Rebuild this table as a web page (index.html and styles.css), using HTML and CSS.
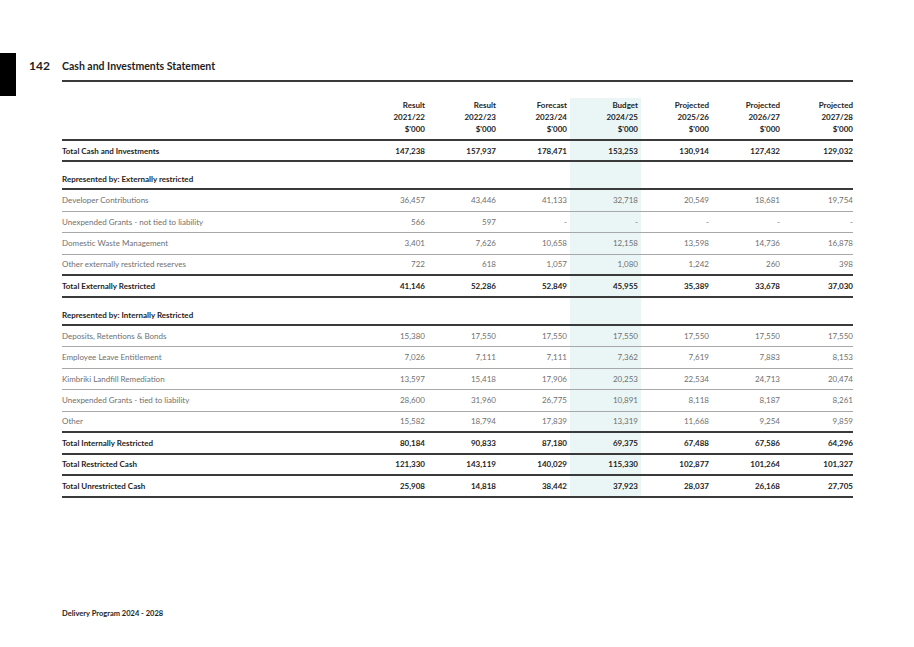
FILE: index.html
```html
<!DOCTYPE html>
<html lang="en">
<head>
<meta charset="utf-8">
<title>Cash and Investments Statement</title>
<link rel="stylesheet" href="styles.css">
</head>
<body>
<div class="page">
  <div class="edge-bar"></div>
  <div class="content">
    <div class="page-head">
      <span class="page-num">142</span>
      <h1 class="title">Cash and Investments Statement</h1>
    </div>
    <div class="statement">
      <div class="row head">
        <div class="cell label"></div>
        <div class="cell num">Result<br>2021/22<br>$'000</div>
        <div class="cell num">Result<br>2022/23<br>$'000</div>
        <div class="cell num">Forecast<br>2023/24<br>$'000</div>
        <div class="cell num hl">Budget<br>2024/25<br>$'000</div>
        <div class="cell num">Projected<br>2025/26<br>$'000</div>
        <div class="cell num">Projected<br>2026/27<br>$'000</div>
        <div class="cell num">Projected<br>2027/28<br>$'000</div>
      </div>
      <div class="row total">
        <div class="cell label">Total Cash and Investments</div>
        <div class="cell num">147,238</div><div class="cell num">157,937</div><div class="cell num">178,471</div><div class="cell num hl">153,253</div><div class="cell num">130,914</div><div class="cell num">127,432</div><div class="cell num">129,032</div>
      </div>
      <div class="row section">
        <div class="cell label">Represented by: Externally restricted</div>
        <div class="cell num"></div><div class="cell num"></div><div class="cell num"></div><div class="cell num hl"></div><div class="cell num"></div><div class="cell num"></div><div class="cell num"></div>
      </div>
      <div class="row data">
        <div class="cell label">Developer Contributions</div>
        <div class="cell num">36,457</div><div class="cell num">43,446</div><div class="cell num">41,133</div><div class="cell num hl">32,718</div><div class="cell num">20,549</div><div class="cell num">18,681</div><div class="cell num">19,754</div>
      </div>
      <div class="row data">
        <div class="cell label">Unexpended Grants - not tied to liability</div>
        <div class="cell num">566</div><div class="cell num">597</div><div class="cell num">-</div><div class="cell num hl">-</div><div class="cell num">-</div><div class="cell num">-</div><div class="cell num">-</div>
      </div>
      <div class="row data">
        <div class="cell label">Domestic Waste Management</div>
        <div class="cell num">3,401</div><div class="cell num">7,626</div><div class="cell num">10,658</div><div class="cell num hl">12,158</div><div class="cell num">13,598</div><div class="cell num">14,736</div><div class="cell num">16,878</div>
      </div>
      <div class="row data last">
        <div class="cell label">Other externally restricted reserves</div>
        <div class="cell num">722</div><div class="cell num">618</div><div class="cell num">1,057</div><div class="cell num hl">1,080</div><div class="cell num">1,242</div><div class="cell num">260</div><div class="cell num">398</div>
      </div>
      <div class="row total">
        <div class="cell label">Total Externally Restricted</div>
        <div class="cell num">41,146</div><div class="cell num">52,286</div><div class="cell num">52,849</div><div class="cell num hl">45,955</div><div class="cell num">35,389</div><div class="cell num">33,678</div><div class="cell num">37,030</div>
      </div>
      <div class="row section">
        <div class="cell label">Represented by: Internally Restricted</div>
        <div class="cell num"></div><div class="cell num"></div><div class="cell num"></div><div class="cell num hl"></div><div class="cell num"></div><div class="cell num"></div><div class="cell num"></div>
      </div>
      <div class="row data">
        <div class="cell label">Deposits, Retentions &amp; Bonds</div>
        <div class="cell num">15,380</div><div class="cell num">17,550</div><div class="cell num">17,550</div><div class="cell num hl">17,550</div><div class="cell num">17,550</div><div class="cell num">17,550</div><div class="cell num">17,550</div>
      </div>
      <div class="row data">
        <div class="cell label">Employee Leave Entitlement</div>
        <div class="cell num">7,026</div><div class="cell num">7,111</div><div class="cell num">7,111</div><div class="cell num hl">7,362</div><div class="cell num">7,619</div><div class="cell num">7,883</div><div class="cell num">8,153</div>
      </div>
      <div class="row data">
        <div class="cell label">Kimbriki Landfill Remediation</div>
        <div class="cell num">13,597</div><div class="cell num">15,418</div><div class="cell num">17,906</div><div class="cell num hl">20,253</div><div class="cell num">22,534</div><div class="cell num">24,713</div><div class="cell num">20,474</div>
      </div>
      <div class="row data">
        <div class="cell label">Unexpended Grants - tied to liability</div>
        <div class="cell num">28,600</div><div class="cell num">31,960</div><div class="cell num">26,775</div><div class="cell num hl">10,891</div><div class="cell num">8,118</div><div class="cell num">8,187</div><div class="cell num">8,261</div>
      </div>
      <div class="row data last">
        <div class="cell label">Other</div>
        <div class="cell num">15,582</div><div class="cell num">18,794</div><div class="cell num">17,839</div><div class="cell num hl">13,319</div><div class="cell num">11,668</div><div class="cell num">9,254</div><div class="cell num">9,859</div>
      </div>
      <div class="row total">
        <div class="cell label">Total Internally Restricted</div>
        <div class="cell num">80,184</div><div class="cell num">90,833</div><div class="cell num">87,180</div><div class="cell num hl">69,375</div><div class="cell num">67,488</div><div class="cell num">67,586</div><div class="cell num">64,296</div>
      </div>
      <div class="row total">
        <div class="cell label">Total Restricted Cash</div>
        <div class="cell num">121,330</div><div class="cell num">143,119</div><div class="cell num">140,029</div><div class="cell num hl">115,330</div><div class="cell num">102,877</div><div class="cell num">101,264</div><div class="cell num">101,327</div>
      </div>
      <div class="row total">
        <div class="cell label">Total Unrestricted Cash</div>
        <div class="cell num">25,908</div><div class="cell num">14,818</div><div class="cell num">38,442</div><div class="cell num hl">37,923</div><div class="cell num">28,037</div><div class="cell num">26,168</div><div class="cell num">27,705</div>
      </div>
    </div>
    <div class="footer">Delivery Program 2024 - 2028</div>
  </div>
</div>
</body>
</html>
```

FILE: styles.css
```css
* { box-sizing: border-box; }
html, body { margin: 0; padding: 0; background: #ffffff; }
body {
  font-family: Lato, "Open Sans", "Liberation Sans", sans-serif;
  color: #1e1e1e;
  width: 914px;
  height: 647px;
  overflow: hidden;
}
.page {
  display: flex;
  align-items: flex-start;
  padding-top: 53px;
}
.edge-bar {
  flex: none;
  width: 16px;
  height: 43px;
  background: #000;
}
.content {
  flex: none;
  width: 837px;
  margin-left: 13px;
  padding-top: 6px;
}
.page-head {
  display: flex;
  align-items: baseline;
  height: 23px;
  border-bottom: 2px solid #3a3a3a;
  margin-left: 33px;
  width: 791px;
}
.page-num {
  margin-left: -33px;
  width: 33px;
  font-size: 12px;
  font-weight: 700;
  line-height: 14px;
}
.title {
  margin: 0;
  font-size: 10.5px;
  font-weight: 700;
  line-height: 14px;
}
.statement {
  margin-left: 33px;
  width: 791px;
  margin-top: 16px;
}
.row {
  display: grid;
  grid-template-columns: 295px repeat(6, 71px) 70px;
  font-size: 8px;
  line-height: 12px;
}
.cell { padding-right: 3px; }
.cell:last-child { padding-right: 0; }
.num { text-align: right; }
.hl { background: #eaf6f6; }
.head {
  height: 43px;
  border-bottom: 2px solid #3a3a3a;
  font-weight: 700;
}
.head .cell { padding-top: 1px; }
.total, .section, .data {
  height: 21.5px;
}
.total .cell, .data .cell, .section .cell {
  display: flex;
  align-items: center;
  justify-content: flex-end;
}
.total .label, .data .label, .section .label { justify-content: flex-start; }
.total {
  font-weight: 700;
  border-bottom: 2px solid #3a3a3a;
  color: #1e1e1e;
}
.head + .total { height: 21px; }
.section {
  height: 28px;
  font-weight: 700;
  border-bottom: 2px solid #3a3a3a;
}
.section .cell { align-items: flex-end; padding-bottom: 3px; }
.data {
  color: #707070;
  border-bottom: 1px solid #a8a8a8;
}
.data.last { border-bottom: 2px solid #3a3a3a; }
.footer {
  margin-left: 33px;
  margin-top: 111px;
  font-size: 7.5px;
  font-weight: 700;
  line-height: 10px;
}
```
